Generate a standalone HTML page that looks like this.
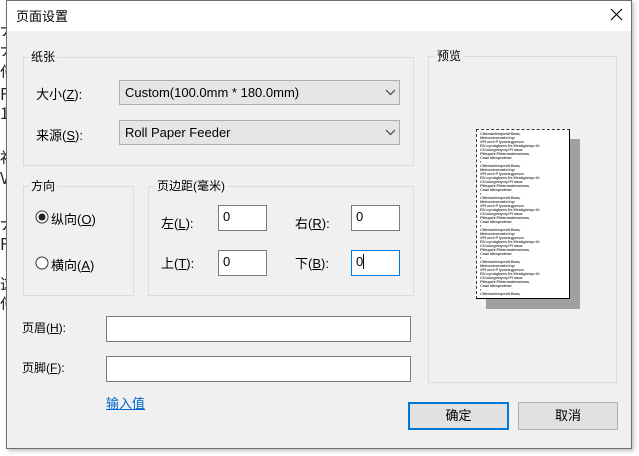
<!DOCTYPE html>
<html><head><meta charset="utf-8"><style>
*{box-sizing:border-box;margin:0;padding:0}
body{width:639px;height:456px;background:#fff;position:relative;overflow:hidden;font-family:"Liberation Sans","Microsoft YaHei","Noto Sans CJK SC",sans-serif;font-size:12px;color:#000}
.a{position:absolute}
.win{left:6px;top:0;width:626px;height:449px;background:#f0f0f0;border:1px solid #6e6e6e;box-shadow:2px 2px 4px rgba(0,0,0,.25)}
.title{left:7px;top:1px;width:624px;height:30px;background:#fff}
.grp{border:1px solid #dcdcdc}
.lg{background:#f0f0f0;padding:0 2px;line-height:14px}
.sel{background:#e5e5e5;border:1px solid #adadad;height:25px;padding:4px 5px;font-size:13px}
.inp{background:#fff;border:1px solid #7a7a7a;padding:3px 4px;font-size:13px}
u{text-decoration:underline}
.btn{border:1px solid #adadad;background:#e1e1e1;text-align:center;line-height:26px;font-size:13px}
.bg{position:absolute;left:0;width:6px;height:14px;overflow:hidden;font-size:16px;line-height:14px;color:#222;font-family:"Noto Sans CJK SC",sans-serif}
</style></head><body>
<div class="bg" style="top:22px">大</div>
<div class="bg" style="top:42px">大</div>
<div class="bg" style="top:64px">使</div>
<div class="bg" style="top:86px">F</div>
<div class="bg" style="top:105px">1</div>
<div class="bg" style="top:150px">社</div>
<div class="bg" style="top:170px">V</div>
<div class="bg" style="top:216px">大</div>
<div class="bg" style="top:236px">F</div>
<div class="bg" style="top:276px">这</div>
<div class="bg" style="top:296px">使</div>
<div class="a win"></div>
<div class="a title"></div>
<div class="a" style="left:16px;top:6px;font-size:13px">页面设置</div>
<svg class="a" style="left:610px;top:8px" width="13" height="13"><path d="M1 1L12 12M12 1L1 12" stroke="#000" stroke-width="1.2"/></svg>

<div class="a grp" style="left:23px;top:57px;width:391px;height:109px"></div>
<div class="a lg" style="left:29px;top:50px">纸张</div>
<div class="a" style="left:36px;top:84px;font-size:13px">大小(<u>Z</u>):</div>
<div class="a sel" style="left:119px;top:80px;width:281px">Custom(100.0mm * 180.0mm)</div>
<svg class="a" style="left:385px;top:89px" width="11" height="7"><path d="M1 1L5.5 5.5L10 1" fill="none" stroke="#444" stroke-width="1.2"/></svg>
<div class="a" style="left:36px;top:125px;font-size:13px">来源(<u>S</u>):</div>
<div class="a sel" style="left:119px;top:120px;width:281px">Roll Paper Feeder</div>
<svg class="a" style="left:385px;top:129px" width="11" height="7"><path d="M1 1L5.5 5.5L10 1" fill="none" stroke="#444" stroke-width="1.2"/></svg>

<div class="a grp" style="left:23px;top:186px;width:111px;height:110px"></div>
<div class="a lg" style="left:29px;top:179px">方向</div>
<svg class="a" style="left:35px;top:210px" width="14" height="14"><circle cx="7" cy="7" r="6" fill="#fff" stroke="#333"/><circle cx="7" cy="7" r="3.5" fill="#222"/></svg>
<div class="a" style="left:51px;top:209px;font-size:13px">纵向(<u>O</u>)</div>
<svg class="a" style="left:35px;top:256px" width="14" height="14"><circle cx="7" cy="7" r="6" fill="#fff" stroke="#333"/></svg>
<div class="a" style="left:51px;top:255px;font-size:13px">横向(<u>A</u>)</div>

<div class="a grp" style="left:148px;top:186px;width:266px;height:110px"></div>
<div class="a lg" style="left:155px;top:179px">页边距(毫米)</div>
<div class="a" style="left:161px;top:213px;font-size:13px">左(<u>L</u>):</div>
<div class="a inp" style="left:218px;top:205px;width:49px;height:26px">0</div>
<div class="a" style="left:295px;top:213px;font-size:13px">右(<u>R</u>):</div>
<div class="a inp" style="left:351px;top:205px;width:49px;height:26px">0</div>
<div class="a" style="left:161px;top:253px;font-size:13px">上(<u>T</u>):</div>
<div class="a inp" style="left:218px;top:250px;width:49px;height:26px">0</div>
<div class="a" style="left:295px;top:253px;font-size:13px">下(<u>B</u>):</div>
<div class="a inp" style="left:351px;top:250px;width:49px;height:26px;border-color:#0078d7">0<span style="border-left:1px solid #000"></span></div>

<div class="a grp" style="left:428px;top:56px;width:189px;height:327px"></div>
<div class="a lg" style="left:435px;top:49px">预览</div>
<div class="a" style="left:486px;top:139px;width:94px;height:170px;background:#a0a0a0"></div>
<div class="a" style="left:476px;top:129px;width:94px;height:170px;background:#fff;border:1px dashed #333;border-right:1px solid #000;border-bottom:1px solid #000;overflow:hidden">
<div style="padding:2px 3px;font-size:4px;line-height:4px;color:#555;font-weight:bold;letter-spacing:-0.2px;white-space:nowrap">
Clitemartlrsqertdl Basa,<br>Metoeoleorwahl lrqe<br>XPt ocre P lyenrargperws<br>RU cymbglanm Ds Weralgbrnpr IU<br>CCnumgewymyi FI naua<br>Piitszpek Phlarmoalmacioaa,<br>Cnall idlespedinae<br>r<br>Clitemartlrsqertdl Basa,<br>Metoeoleorwahl lrqe<br>XPt ocre P lyenrargperws<br>RU cymbglanm Ds Weralgbrnpr IU<br>CCnumgewymyi FI naua<br>Piitszpek Phlarmoalmacioaa,<br>Cnall idlespedinae<br>r<br>Clitemartlrsqertdl Basa,<br>Metoeoleorwahl lrqe<br>XPt ocre P lyenrargperws<br>RU cymbglanm Ds Weralgbrnpr IU<br>CCnumgewymyi FI naua<br>Piitszpek Phlarmoalmacioaa,<br>Cnall idlespedinae<br>r<br>Clitemartlrsqertdl Basa,<br>Metoeoleorwahl lrqe<br>XPt ocre P lyenrargperws<br>RU cymbglanm Ds Weralgbrnpr IU<br>CCnumgewymyi FI naua<br>Piitszpek Phlarmoalmacioaa,<br>Cnall idlespedinae<br>r<br>Clitemartlrsqertdl Basa,<br>Metoeoleorwahl lrqe<br>XPt ocre P lyenrargperws<br>RU cymbglanm Ds Weralgbrnpr IU<br>CCnumgewymyi FI naua<br>Piitszpek Phlarmoalmacioaa,<br>Cnall idlespedinae<br>r<br>Clitemartlrsqertdl Basa,
</div></div>

<div class="a" style="left:22px;top:319px">页眉(<u>H</u>):</div>
<div class="a inp" style="left:106px;top:316px;width:305px;height:26px"></div>
<div class="a" style="left:22px;top:359px">页脚(<u>F</u>):</div>
<div class="a inp" style="left:106px;top:356px;width:305px;height:26px"></div>
<div class="a" style="left:106px;top:393px;color:#0066cc;text-decoration:underline;font-size:13px">输入值</div>
<div class="a btn" style="left:408px;top:402px;width:101px;height:28px;border:2px solid #0078d7;line-height:24px">确定</div>
<div class="a btn" style="left:518px;top:402px;width:100px;height:28px">取消</div>
</body></html>
